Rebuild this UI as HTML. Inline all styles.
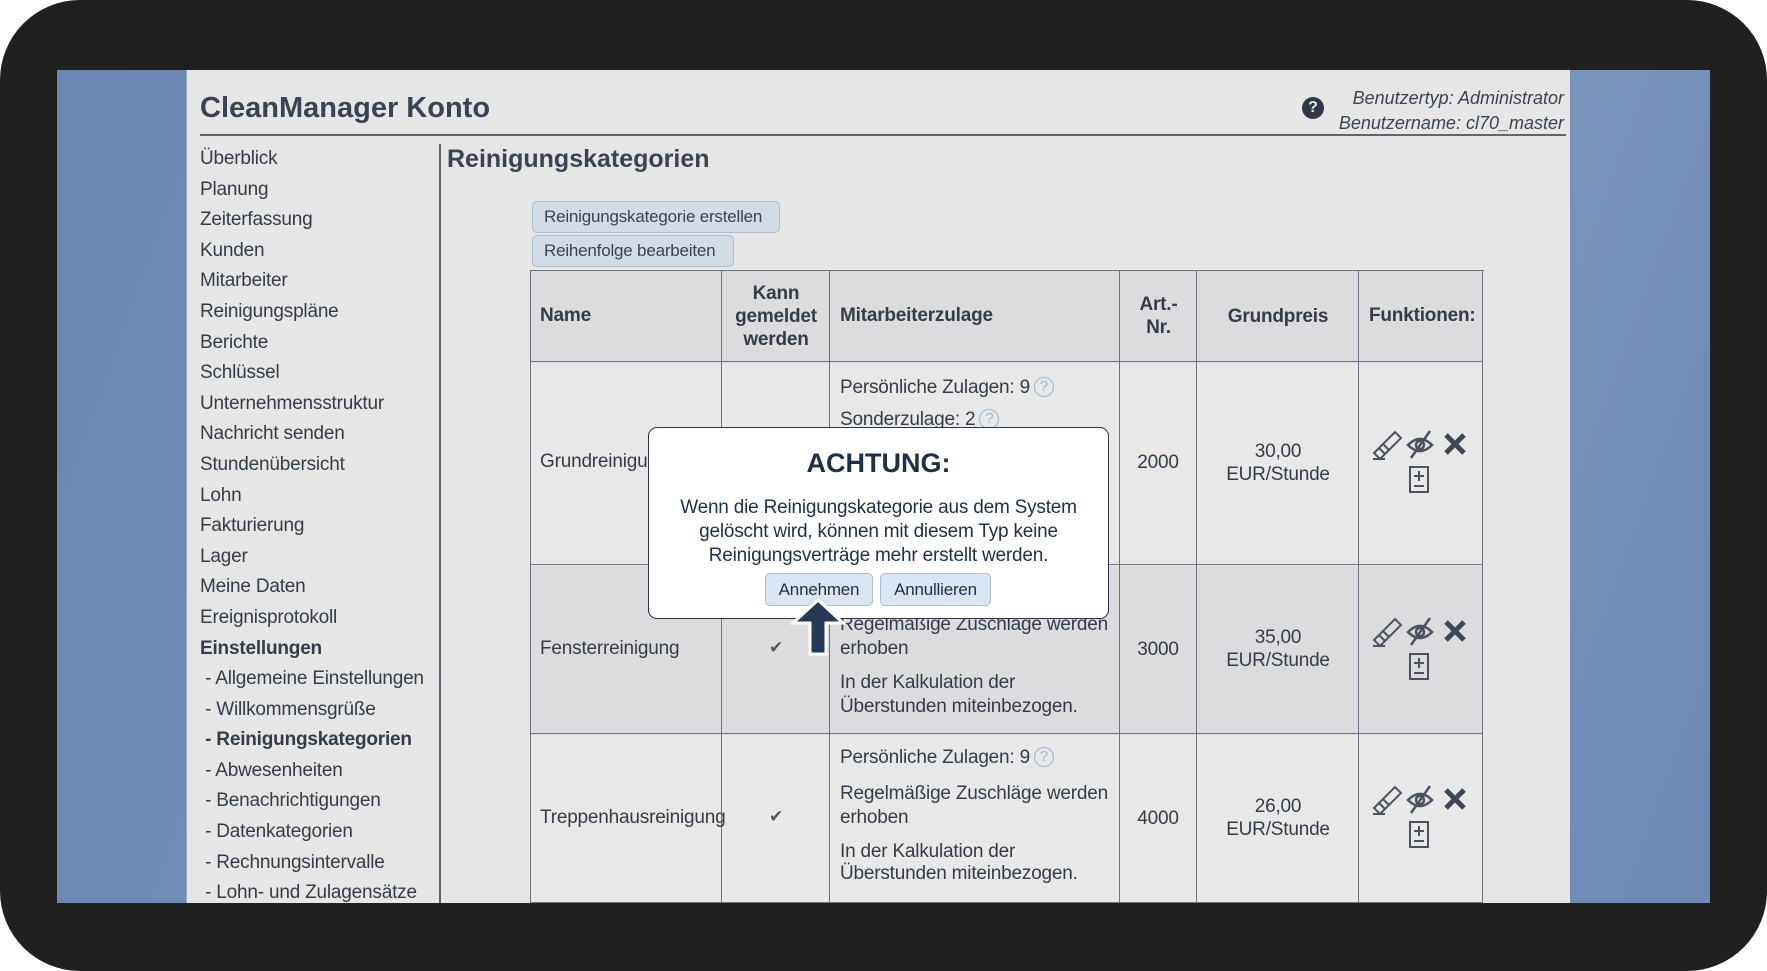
<!DOCTYPE html><html><head><meta charset="utf-8"><style>
*{margin:0;padding:0;box-sizing:border-box}
body{width:1767px;height:971px;background:#fff;position:relative;overflow:hidden;font-family:"Liberation Sans",sans-serif;color:#343c48}
#frame{position:absolute;left:0;top:0;width:1767px;height:971px;background:#212021;border-radius:80px}
#blue{position:absolute;left:57px;top:70px;width:1653px;height:833px;background:linear-gradient(110deg,#6a88b3 0%,#7592bb 60%,#7a96bd 75%,#6b89b4 100%);overflow:hidden}
#panel{position:absolute;left:186px;top:70px;width:1384px;height:833px;background:#e6e6e6;border-left:1px solid #9aa;overflow:hidden}
.a{position:absolute;white-space:nowrap}
.side{font-size:19px;line-height:30.6px;left:13px;letter-spacing:-0.2px}
.btn{position:absolute;background:#d3dbe5;border:1px solid #aebed2;border-radius:5px;font-size:17px;color:#3a4353;padding:0 11px;line-height:30px;white-space:nowrap;letter-spacing:-0.2px}
.cell{position:absolute;border-right:1.5px solid #6d7380;border-bottom:1.5px solid #6d7380}
.t{font-size:19px;color:#343c48;position:absolute;white-space:nowrap;letter-spacing:-0.2px}
.h{font-weight:bold;font-size:19px;color:#343c48;position:absolute;text-align:center;letter-spacing:-0.2px}
.q{display:inline-block;width:20px;height:20px;border:1.5px solid #9bb5d8;border-radius:50%;color:#9bb5d8;font-size:15px;text-align:center;line-height:17px;vertical-align:2px;margin-left:4px}
</style></head><body>
<div id="frame"></div>
<div id="blue"></div>
<div id="panel">
<div class="a" style="left:13px;top:22px;font-size:29px;font-weight:bold;color:#3a4353">CleanManager Konto</div>
<div style="position:absolute;left:13px;top:64px;width:1366px;height:1.5px;background:#5e6570"></div>
<div class="a" style="right:6px;top:16px;font-size:18px;font-style:italic;text-align:right;line-height:25px;color:#3a4353">Benutzertyp: Administrator<br>Benutzername: cl70_master</div>
<div class="a" style="left:1115px;top:27px;width:22px;height:22px;border-radius:50%;background:#2f3844;color:#e6e6e6;font-weight:bold;font-size:16px;text-align:center;line-height:22px">?</div>
<div style="position:absolute;left:252px;top:74px;width:1.5px;height:760px;background:#5e6570"></div>
<div class="a" style="left:260px;top:75px;font-size:25px;font-weight:bold;color:#3a4353">Reinigungskategorien</div>
<div class="a side" style="top:74px">Überblick<br>Planung<br>Zeiterfassung<br>Kunden<br>Mitarbeiter<br>Reinigungspläne<br>Berichte<br>Schlüssel<br>Unternehmensstruktur<br>Nachricht senden<br>Stundenübersicht<br>Lohn<br>Fakturierung<br>Lager<br>Meine Daten<br>Ereignisprotokoll<br><b>Einstellungen</b><br>&nbsp;- Allgemeine Einstellungen<br>&nbsp;- Willkommensgrüße<br>&nbsp;<b>- Reinigungskategorien</b><br>&nbsp;- Abwesenheiten<br>&nbsp;- Benachrichtigungen<br>&nbsp;- Datenkategorien<br>&nbsp;- Rechnungsintervalle<br>&nbsp;- Lohn- und Zulagensätze</div>
<div class="btn" style="left:345px;top:131px;width:248px;height:32px">Reinigungskategorie erstellen</div>
<div class="btn" style="left:345px;top:165px;width:202px;height:32px">Reihenfolge bearbeiten</div>
<div style="position:absolute;left:343px;top:200px;width:954px;height:640px;border-left:1.5px solid #6d7380;border-top:1.5px solid #6d7380">
<div style="position:absolute;left:0;top:0;width:952px;height:92px;background:#dcdcdf"></div>
<div style="position:absolute;left:0;top:92px;width:952px;height:203px;background:#e8e8e8"></div>
<div style="position:absolute;left:0;top:295px;width:952px;height:169px;background:#dcdcdf"></div>
<div style="position:absolute;left:0;top:464px;width:952px;height:170px;background:#e8e8e8"></div>
</div>
<div id="cells"></div>
</div>
<div id="ov"></div>
<script>
var o=186,t=70;
var cols=[529,721,829,1119,1196,1358,1482],rows=[270,362,565,734,903];
var h='';
for(var r=0;r<4;r++)for(var c=0;c<6;c++)h+='<div class="cell" style="left:'+(cols[c]-o)+'px;top:'+(rows[r]-t)+'px;width:'+(cols[c+1]-cols[c])+'px;height:'+(rows[r+1]-rows[r])+'px"></div>';
function T(x,y,s,cls,ex){h+='<div class="'+(cls||'t')+'" style="left:'+(x-o)+'px;top:'+(y-t-11)+'px;'+(ex||'')+'">'+s+'</div>';}
function C(cx,y,s,cls){h+='<div class="'+(cls||'t')+'" style="left:'+(cx-o-100)+'px;width:200px;text-align:center;top:'+(y-t-11)+'px;line-height:23px">'+s+'</div>';}
T(539,316,'Name','h');
h+='<div class="h" style="left:'+(721-o)+'px;width:108px;top:'+(282-t)+'px;line-height:23px">Kann<br>gemeldet<br>werden</div>';
T(839,316,'Mitarbeiterzulage','h');
h+='<div class="h" style="left:'+(1119-o)+'px;width:77px;top:'+(293-t)+'px;line-height:23px">Art.-<br>Nr.</div>';
C(1277,316,'Grundpreis','h');T(1368,316,'Funktionen:','h');
var q='<span class="q">?</span>';
T(539,462,'Grundreinigung');T(839,388,'Persönliche Zulagen: 9'+q);T(839,420,'Sonderzulage: 2'+q);
C(1157,462,'2000');h+='<div class="t" style="left:'+(1277-o-100)+'px;width:200px;text-align:center;top:'+(440-t)+'px;line-height:23px">30,00<br>EUR/Stunde</div>';
T(539,649,'Fensterreinigung');T(768,649,'✔','t','color:#555;font-size:17px');
T(839,625,'Regelmäßige Zuschläge werden');T(839,649,'erhoben');T(839,683,'In der Kalkulation der');T(839,707,'Überstunden miteinbezogen.');
C(1157,649,'3000');h+='<div class="t" style="left:'+(1277-o-100)+'px;width:200px;text-align:center;top:'+(626-t)+'px;line-height:23px">35,00<br>EUR/Stunde</div>';
T(539,818,'Treppenhausreinigung');T(768,818,'✔','t','color:#555;font-size:17px');
T(839,758,'Persönliche Zulagen: 9'+q);T(839,794,'Regelmäßige Zuschläge werden');T(839,818,'erhoben');T(839,852,'In der Kalkulation der');T(839,874,'Überstunden miteinbezogen.');
C(1157,818,'4000');h+='<div class="t" style="left:'+(1277-o-100)+'px;width:200px;text-align:center;top:'+(795-t)+'px;line-height:23px">26,00<br>EUR/Stunde</div>';
function icons(y){
h+='<svg style="position:absolute;left:'+(1370-o)+'px;top:'+(y-t-14)+'px" width="100" height="70" viewBox="0 0 100 70">'+
'<g fill="none" stroke="#4a5260" stroke-width="2"><path d="M3 26 L24 5 L30 11 L9 32 Z M8 21 L14 27 M12 17 L18 23"/><path d="M2 32 H14" /></g>'+
'<g fill="none" stroke="#4a5260" stroke-width="2.5"><path d="M37 18 Q49 6 61 18 Q49 30 37 18 Z"/><circle cx="49" cy="18" r="4"/><path d="M40 31 L59 4"/></g>'+
'<path d="M75 8 L93 26 M93 8 L75 26" stroke="#3e4756" stroke-width="5"/>'+
'<g fill="none" stroke="#4a5260" stroke-width="2"><rect x="39" y="40" width="18" height="25"/><path d="M48 44 V54 M43 49 H53 M43 59 H53"/></g></svg>';}
icons(441);icons(628);icons(796);
document.getElementById('cells').outerHTML=h;
document.getElementById('ov').innerHTML=
'<div style="position:absolute;left:648px;top:427px;width:461px;height:192px;background:#fff;border:1.5px solid #2a3445;border-radius:9px"></div>'+
'<div class="a" style="left:648px;width:461px;text-align:center;top:448px;font-size:27px;font-weight:bold;color:#1f2f45">ACHTUNG:</div>'+
'<div class="a" style="left:648px;width:461px;text-align:center;top:496px;font-size:19px;line-height:24px;color:#1f2f45;letter-spacing:-0.2px">Wenn die Reinigungskategorie aus dem System<br>gelöscht wird, können mit diesem Typ keine<br>Reinigungsverträge mehr erstellt werden.</div>'+
'<div class="btn" style="left:765px;top:573px;width:108px;height:33px;text-align:center;padding:0;line-height:31px;background:#dbe5f1;color:#1f2f45">Annehmen</div>'+
'<div class="btn" style="left:880px;top:573px;width:111px;height:33px;text-align:center;padding:0;line-height:31px;background:#dbe5f1;color:#1f2f45">Annullieren</div>'+
'<svg style="position:absolute;left:780px;top:595px" width="72" height="64"><path d="M38 5 L63 28 L46 28 L46 59 L30 59 L30 28 L13 28 Z" fill="#263a58" stroke="#fff" stroke-width="3"/></svg>';
</script>
</body></html>
